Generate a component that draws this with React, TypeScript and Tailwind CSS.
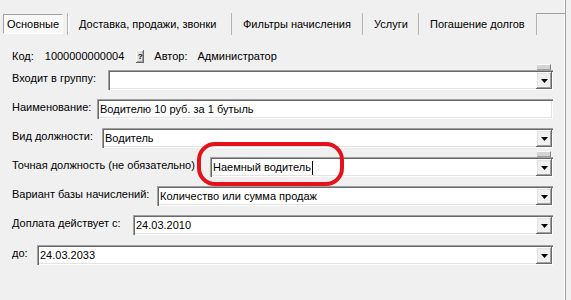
import React from "react";

const sunken =
  "shadow-[inset_1px_1px_0_#a0a0a0,inset_2px_2px_0_#696969,inset_-1px_-1px_0_#ffffff,inset_-2px_-2px_0_#e3e3e3]";
const raised =
  "shadow-[inset_-1px_-1px_0_#696969,inset_1px_1px_0_#ffffff,inset_-2px_-2px_0_#a0a0a0,inset_2px_2px_0_#e3e3e3]";

function DropBtn({ tab }: { tab?: boolean }) {
  return (
    <div className="relative h-[17px] w-[16px] shrink-0 mt-[2px] mb-[1px] mr-[1px]">
      {tab && (
        <div className="absolute -top-[8px] left-[1px] h-[6px] w-[14px] bg-[#d4d4d4] border-t border-t-white border-r border-r-[#808080] border-b border-b-[#a0a0a0]" />
      )}
      <div className={`h-full w-full bg-[#f0f0f0] ${raised} flex items-center justify-center`}>
        <svg width="7" height="4" viewBox="0 0 7 4">
          <polygon points="0,0 7,0 3.5,4" fill="#000" />
        </svg>
      </div>
    </div>
  );
}

function Row({
  label,
  labelW,
  value,
  drop,
  tab,
  cursor,
}: {
  label: string;
  labelW: number;
  value?: string;
  drop?: boolean;
  tab?: boolean;
  cursor?: boolean;
}) {
  return (
    <div className="flex h-[20px] items-start">
      <div className="shrink-0 pt-[1px] leading-[14px] whitespace-nowrap" style={{ width: labelW }}>
        {label}
      </div>
      <div className={`relative flex-1 h-[20px] bg-white ${sunken} flex items-stretch`}>
        <div className="flex-1 flex items-center pl-[3px] pt-[1px] whitespace-nowrap overflow-hidden">
          {value}
          {cursor && <span className="inline-block w-[1px] h-[14px] bg-black ml-[1px]" />}
        </div>
        {drop && <DropBtn tab={tab} />}
      </div>
    </div>
  );
}

export default function App() {
  return (
    <div
      className="relative w-[571px] h-[300px] bg-[#f0f0f0] text-[11px] text-black overflow-hidden"
      style={{ fontFamily: '"Liberation Sans", Arial, sans-serif' }}
    >
      <div className="w-[566px] h-[300px] border-r border-r-[#a0a0a0] shadow-[inset_-1px_0_0_#ffffff]">
        {/* Tabs */}
        <div className="flex pt-[13px] h-[36px]">
          <div className="w-[68px] h-[22px] pl-[3px] pt-[1px] border-r border-r-[#b4b4b4] shadow-[1px_0_0_#ffffff]">
            <div className="w-[60px] h-[20px] bg-[#f9f9f9] border-t border-l border-[#a0a0a0] border-b border-r border-b-white border-r-white flex items-center justify-center">
              Основные
            </div>
          </div>
          <div className="w-[164px] h-[22px] pl-[11px] pt-[1px] flex items-center border-r border-r-[#b4b4b4]">
            Доставка, продажи, звонки
          </div>
          <div className="w-[131px] h-[22px] pl-[11px] pt-[1px] flex items-center border-r border-r-[#b4b4b4]">
            Фильтры начисления
          </div>
          <div className="w-[56px] h-[22px] pl-[11px] pt-[1px] flex items-center border-r border-r-[#b4b4b4]">
            Услуги
          </div>
          <div className="w-[118px] h-[22px] pl-[11px] pt-[1px] flex items-center border-r border-r-[#b4b4b4]">
            Погашение долгов
          </div>
          <div className="flex-1 h-[22px] border-t border-t-[#a0a0a0]" />
        </div>

        {/* Form */}
        <div className="w-[553px] pl-[12px] flex flex-col">
          <div className="flex items-center h-[14px] mt-[13px] whitespace-nowrap">
            <span>Код:</span>
            <span className="ml-[11px]">1000000000004</span>
            <span
              className={`ml-[12px] w-[8px] h-[13px] bg-[#e0e0e0] ${raised} text-[8px] font-bold leading-[13px] text-center`}
            >
              ?
            </span>
            <span className="ml-[10px]">Автор:</span>
            <span className="ml-[10px]">Администратор</span>
          </div>
          <div className="mt-[7px]">
            <Row label="Входит в группу:" labelW={96} drop tab />
          </div>
          <div className="mt-[9px]">
            <Row label="Наименование:" labelW={85} value="Водителю 10 руб. за 1 бутыль" />
          </div>
          <div className="mt-[9px]">
            <Row label="Вид должности:" labelW={90} value="Водитель" drop />
          </div>
          <div className="mt-[9px]">
            <Row
              label="Точная должность (не обязательно)"
              labelW={198}
              value="Наемный водитель"
              drop
              tab
              cursor
            />
          </div>
          <div className="mt-[9px]">
            <Row label="Вариант базы начислений:" labelW={145} value="Количество или сумма продаж" drop />
          </div>
          <div className="mt-[9px]">
            <Row label="Доплата действует с:" labelW={121} value="24.03.2010" drop />
          </div>
          <div className="mt-[10px]">
            <Row label="до:" labelW={25} value="24.03.2033" drop />
          </div>
        </div>
      </div>

      {/* red highlight */}
      <div className="absolute left-[197px] top-[142px] w-[147px] h-[44px] border-[4px] border-[#e5121c] rounded-[18px] pointer-events-none" />
    </div>
  );
}
